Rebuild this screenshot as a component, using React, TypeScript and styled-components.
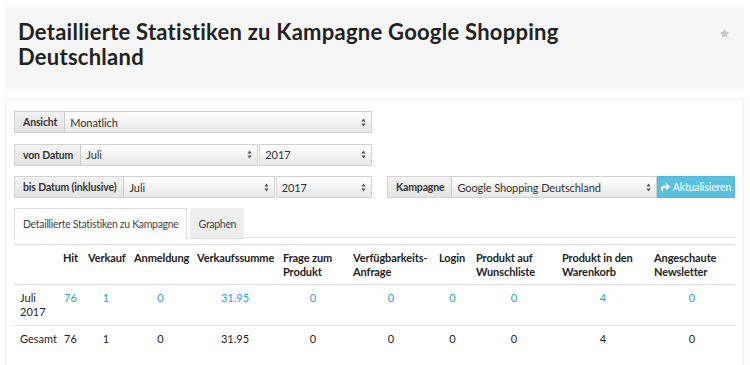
import React from "react";
import styled, { createGlobalStyle } from "styled-components";
import { FaShare, FaStar } from "react-icons/fa";

const GlobalStyle = createGlobalStyle`
  html, body { margin: 0; padding: 0; background: #fff; }
  body {
    font-family: Lato, "Liberation Sans", Arial, sans-serif;
    color: #333;
    -webkit-font-smoothing: antialiased;
  }
  * { box-sizing: border-box; }
`;

const Page = styled.div`
  padding: 7px 6px 0 5px;
`;

const Header = styled.header`
  background: #f6f6f6;
  height: 82px;
  padding: 12px 15px 0 13px;
  display: flex;
  justify-content: space-between;
  align-items: flex-start;
`;

const Title = styled.h1`
  margin: 0;
  max-width: 620px;
  font-size: 22px;
  line-height: 25px;
  letter-spacing: 0.25px;
  font-weight: 700;
  color: #222;
`;

const Star = styled.span`
  color: #c9c9c9;
  font-size: 9px;
  margin-top: 10px;
  display: flex;
`;

const Panel = styled.section`
  margin-top: 10px;
  border: 1px solid #eee;
  box-shadow: 0 1px 2px rgba(0, 0, 0, 0.04);
  padding: 11px 8px 20px 8px;
`;

const Form = styled.div`
  display: flex;
  flex-direction: column;
  gap: 10.5px;
`;

const FormRow = styled.div`
  display: grid;
  grid-template-columns: 358px 348px;
  column-gap: 15px;
`;

const Group = styled.div`
  display: flex;
  height: 22px;
`;

const Addon = styled.div`
  display: flex;
  align-items: center;
  padding: 0 7px 0 8px;
  font-size: 10.5px;
  letter-spacing: -0.15px;
  font-weight: 700;
  color: #333;
  white-space: nowrap;
  background: linear-gradient(#f3f3f3, #e4e4e4);
  border: 1px solid #d2d2d2;
  border-right-color: #c9c9c9;
`;

const SelectBox = styled.div<{ $grow?: number }>`
  flex: ${(p) => p.$grow ?? 1} 1 0;
  min-width: 0;
  display: flex;
  align-items: center;
  justify-content: space-between;
  padding: 0 5px 0 5px;
  font-size: 11px;
  letter-spacing: -0.1px;
  color: #333;
  white-space: nowrap;
  background: linear-gradient(#ffffff, #f1f1f1 60%, #e9e9e9);
  border: 1px solid #d0d0d0;
  border-left: none;
  & + & {
    margin-left: 1px;
    border-left: 1px solid #d6d6d6;
  }
`;

const Arrows = () => (
  <svg width="5" height="9" viewBox="0 0 5 9" style={{ flex: "none" }}>
    <path d="M2.5 0.5 L4.6 3.4 L0.4 3.4 Z" fill="#555" />
    <path d="M2.5 8.5 L4.6 5.6 L0.4 5.6 Z" fill="#555" />
  </svg>
);

const Select = ({ value, grow }: { value: string; grow?: number }) => (
  <SelectBox $grow={grow}>
    <span>{value}</span>
    <Arrows />
  </SelectBox>
);

const InfoButton = styled.button`
  flex: 0 0 78px;
  display: flex;
  align-items: center;
  justify-content: center;
  gap: 3px;
  padding: 0;
  font-family: inherit;
  font-size: 10.5px;
  letter-spacing: -0.1px;
  color: #fff;
  background: #5bc0de;
  border: 1px solid #52bbdb;
  cursor: pointer;
  svg { font-size: 9px; }
`;

const Tabs = styled.div`
  margin-top: 10px;
  display: flex;
  gap: 3px;
  border-bottom: 1px solid #ddd;
  height: 30px;
`;

const Tab = styled.div<{ $active?: boolean }>`
  display: flex;
  align-items: center;
  padding: 0 7px 0 8px;
  font-size: 10.5px;
  letter-spacing: -0.3px;
  color: #444;
  background: ${(p) => (p.$active ? "#fff" : "#eee")};
  border: 1px solid ${(p) => (p.$active ? "#ddd" : "#eee")};
  border-bottom-color: ${(p) => (p.$active ? "#fff" : "#ddd")};
  height: 31px;
  margin-bottom: -1px;
`;

const Table = styled.table`
  margin-top: 6px;
  width: 721px;
  table-layout: fixed;
  border-collapse: collapse;
  font-size: 11px;
  line-height: 14px;
`;

const Th = styled.th`
  text-align: left;
  vertical-align: top;
  font-weight: 700;
  letter-spacing: -0.1px;
  color: #222;
  padding: 6px 5px 5px;
  border-top: 1px solid #ddd;
  border-bottom: 1px solid #ddd;
  white-space: nowrap;
`;

const Td = styled.td<{ $label?: boolean }>`
  text-align: ${(p) => (p.$label ? "left" : "center")};
  vertical-align: top;
  padding: 6px 5px 6px;
  color: #222;
  white-space: nowrap;
  ${(p) => (p.$label ? "padding-left: 6px;" : "")}
`;

const Tr = styled.tr<{ $border?: boolean }>`
  & > td {
    border-bottom: ${(p) => (p.$border ? "1px solid #ddd" : "none")};
  }
`;

const Link = styled.a`
  color: #2d9bea;
  text-decoration: none;
`;

const widths = [44, 25, 46, 63, 86, 70, 86, 37, 86, 92, 86];

const headers: React.ReactNode[] = [
  "",
  "Hit",
  "Verkauf",
  "Anmeldung",
  "Verkaufssumme",
  <>Frage zum<br />Produkt</>,
  <>Verfügbarkeits-<br />Anfrage</>,
  "Login",
  <>Produkt auf<br />Wunschliste</>,
  <>Produkt in den<br />Warenkorb</>,
  <>Angeschaute<br />Newsletter</>,
];

const values = ["76", "1", "0", "31.95", "0", "0", "0", "0", "4", "0"];

export default function App() {
  return (
    <Page>
      <GlobalStyle />
      <Header>
        <Title>Detaillierte Statistiken zu Kampagne Google Shopping Deutschland</Title>
        <Star>
          <FaStar />
        </Star>
      </Header>
      <Panel>
        <Form>
          <FormRow>
            <Group>
              <Addon>Ansicht</Addon>
              <Select value="Monatlich" />
            </Group>
          </FormRow>
          <FormRow>
            <Group>
              <Addon>von Datum</Addon>
              <Select value="Juli" grow={1.65} />
              <Select value="2017" />
            </Group>
          </FormRow>
          <FormRow>
            <Group>
              <Addon>bis Datum (inklusive)</Addon>
              <Select value="Juli" grow={1.65} />
              <Select value="2017" />
            </Group>
            <Group>
              <Addon>Kampagne</Addon>
              <Select value="Google Shopping Deutschland" />
              <InfoButton>
                <FaShare />
                Aktualisieren
              </InfoButton>
            </Group>
          </FormRow>
        </Form>
        <Tabs>
          <Tab $active>Detaillierte Statistiken zu Kampagne</Tab>
          <Tab>Graphen</Tab>
        </Tabs>
        <Table>
          <colgroup>
            {widths.map((w, i) => (
              <col key={i} style={{ width: w }} />
            ))}
          </colgroup>
          <thead>
            <tr>
              {headers.map((h, i) => (
                <Th key={i}>{h}</Th>
              ))}
            </tr>
          </thead>
          <tbody>
            <Tr $border>
              <Td $label>
                Juli
                <br />
                2017
              </Td>
              {values.map((v, i) => (
                <Td key={i}>
                  <Link href="#">{v}</Link>
                </Td>
              ))}
            </Tr>
            <Tr>
              <Td $label>Gesamt</Td>
              {values.map((v, i) => (
                <Td key={i}>{v}</Td>
              ))}
            </Tr>
          </tbody>
        </Table>
      </Panel>
    </Page>
  );
}
